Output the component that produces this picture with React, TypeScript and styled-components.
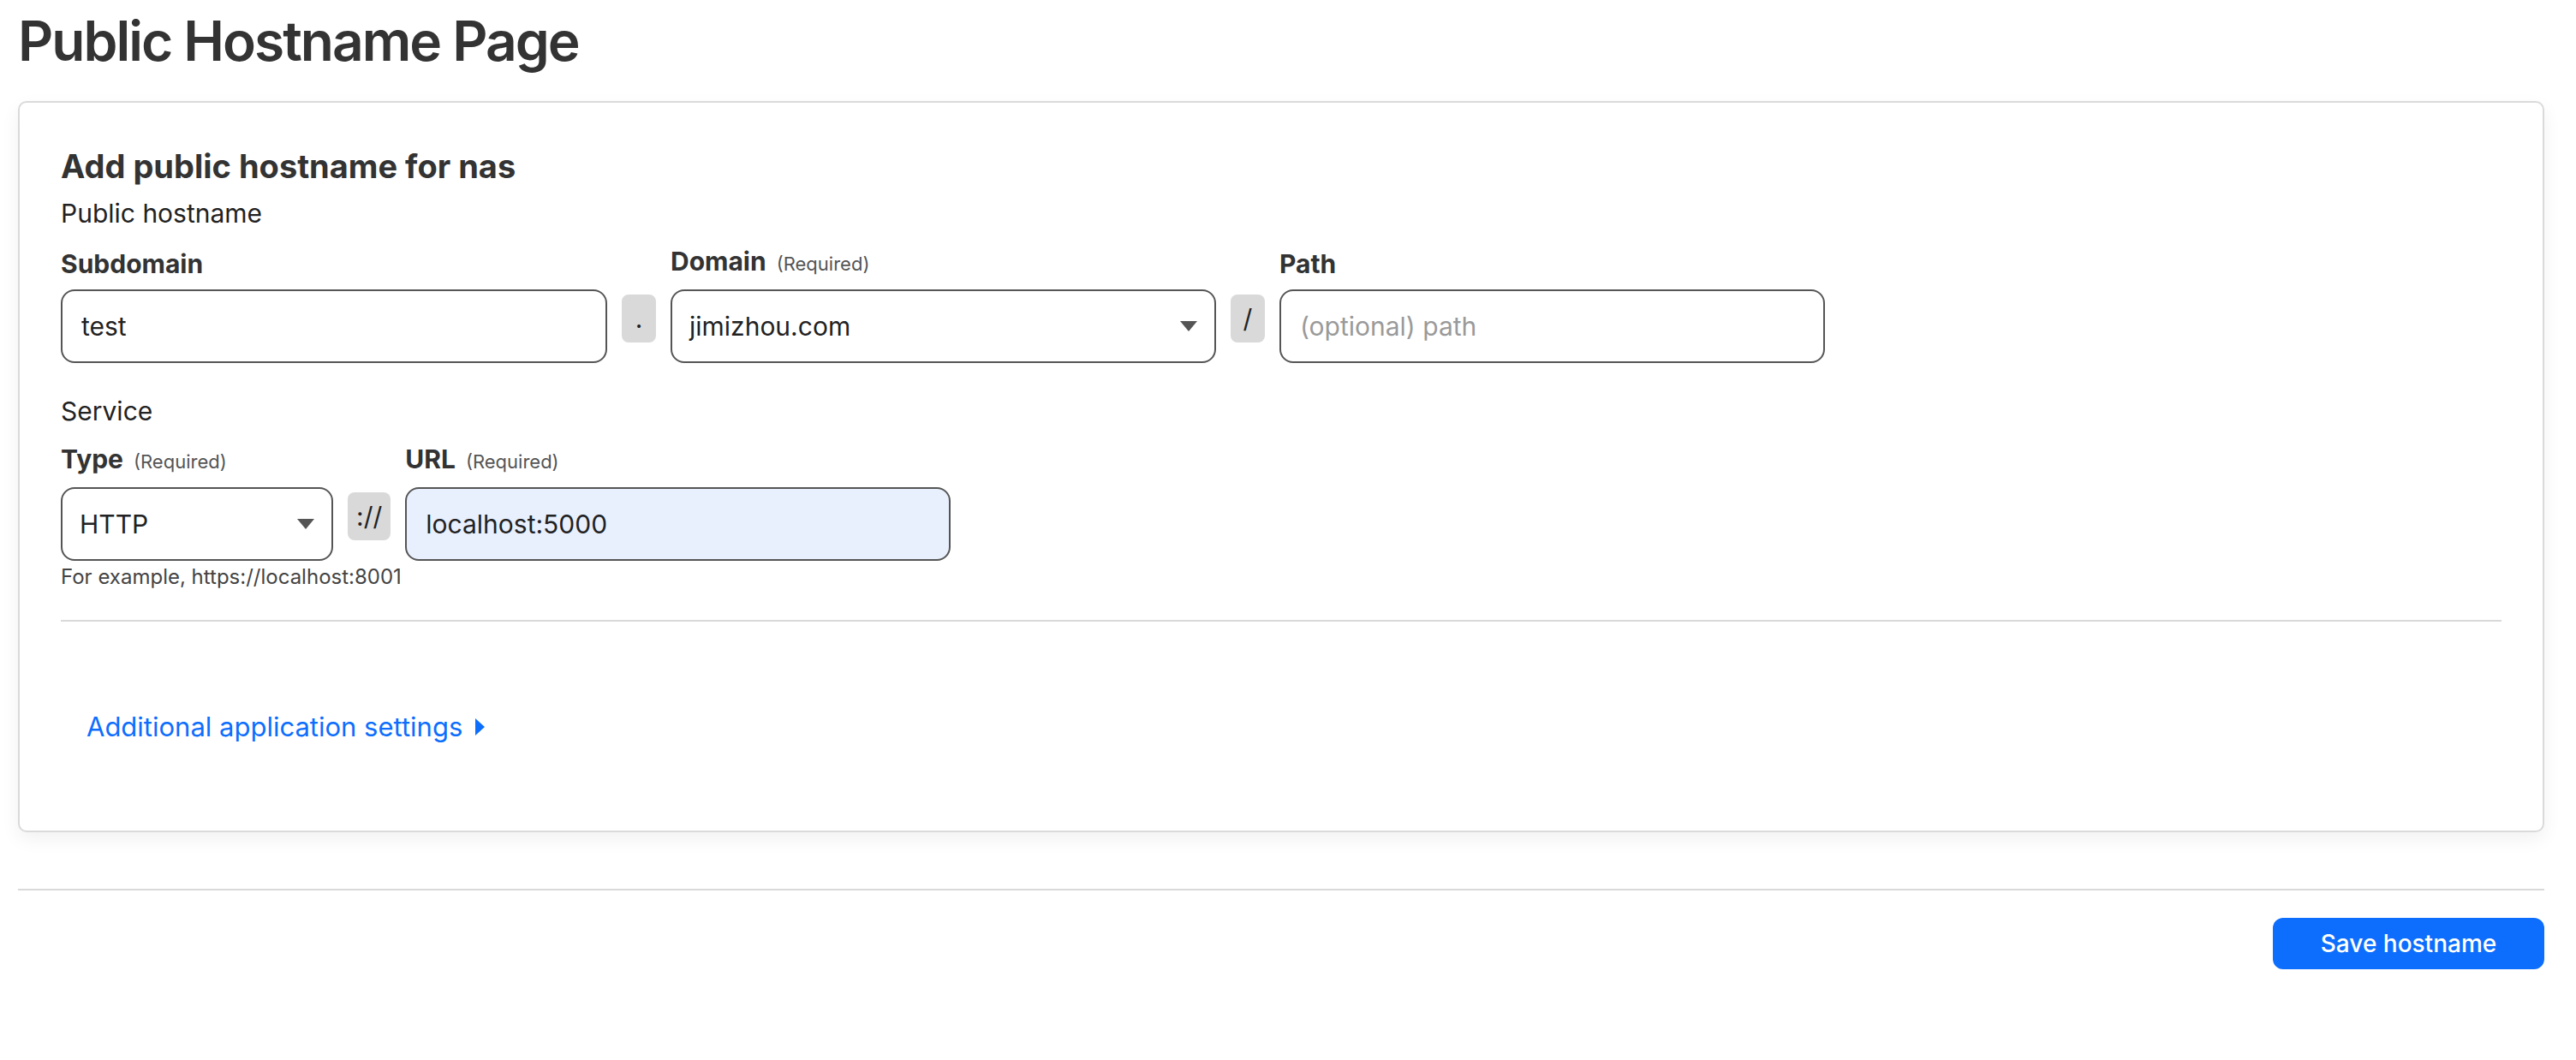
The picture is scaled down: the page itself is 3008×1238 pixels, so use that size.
import React from "react";
import styled, { createGlobalStyle } from "styled-components";

const GlobalStyle = createGlobalStyle`
  html, body {
    margin: 0;
    padding: 0;
    background: #ffffff;
  }
  body {
    font-family: Inter, "Noto Sans", "Liberation Sans", sans-serif;
    color: #333333;
  }
  * { box-sizing: border-box; }
`;

const Page = styled.div`
  padding: 0 37px 40px 21px;
  display: flex;
  flex-direction: column;
`;

const Title = styled.h1`
  margin: 9px 0 0;
  font-size: 64px;
  line-height: 78px;
  font-weight: 600;
  letter-spacing: -2px;
  color: #333333;
`;

const Card = styled.section`
  margin-top: 31px;
  border: 2px solid #dadada;
  border-radius: 10px;
  box-shadow: 0 8px 22px rgba(0, 0, 0, 0.06);
  padding: 50px 48px 0;
  display: flex;
  flex-direction: column;
`;

const CardTitle = styled.h3`
  margin: 0;
  font-size: 38px;
  line-height: 48px;
  font-weight: 700;
  color: #333333;
`;

const SectionLabel = styled.div<{ $gap: number }>`
  margin-top: ${(p) => p.$gap}px;
  font-size: 30px;
  line-height: 40px;
  color: #222222;
`;

const FieldRow = styled.div`
  margin-top: 16px;
  display: flex;
  align-items: flex-end;
  gap: 17px;
`;

const Field = styled.div<{ $width: number }>`
  width: ${(p) => p.$width}px;
  display: flex;
  flex-direction: column;
  gap: 10px;
`;

const LabelLine = styled.div`
  display: flex;
  align-items: baseline;
  gap: 12px;
  line-height: 40px;
`;

const LabelText = styled.span`
  font-size: 30px;
  font-weight: 700;
  color: #333333;
`;

const Hint = styled.span`
  font-size: 22px;
  color: #555555;
`;

const TextInput = styled.input<{ $filled?: boolean }>`
  width: 100%;
  height: 86px;
  border: 2px solid #555555;
  border-radius: 16px;
  padding: 0 22px;
  font-family: inherit;
  font-size: 30px;
  color: #222222;
  background: ${(p) => (p.$filled ? "#e8f0fe" : "#ffffff")};
  outline: none;
  &::placeholder {
    color: #9a9a9a;
  }
`;

const SelectBox = styled.div`
  width: 100%;
  height: 86px;
  border: 2px solid #555555;
  border-radius: 16px;
  padding: 0 20px 0 20px;
  display: flex;
  align-items: center;
  justify-content: space-between;
  font-size: 30px;
  color: #222222;
  background: #ffffff;
`;

const Separator = styled.div`
  align-self: flex-end;
  margin-bottom: 24px;
  min-width: 40px;
  height: 56px;
  padding: 0 10px;
  border-radius: 8px;
  background: #d9d9d9;
  display: flex;
  align-items: center;
  justify-content: center;
  font-size: 30px;
  color: #222222;
`;

const Helper = styled.div`
  margin-top: 4px;
  font-size: 24px;
  line-height: 30px;
  color: #444444;
`;

const Rule = styled.hr<{ $top: number }>`
  margin: ${(p) => p.$top}px 0 0;
  border: none;
  height: 2px;
  background: #d9d9d9;
  width: 100%;
`;

const Disclosure = styled.div`
  padding: 103px 30px 101px;
`;

const DisclosureButton = styled.button`
  border: none;
  background: none;
  padding: 0;
  display: inline-flex;
  align-items: center;
  gap: 15px;
  font-family: inherit;
  font-size: 31px;
  line-height: 40px;
  color: #0d6efd;
  cursor: pointer;
`;

const Footer = styled.div`
  margin-top: 32px;
  display: flex;
  justify-content: flex-end;
`;

const PrimaryButton = styled.button`
  width: 317px;
  height: 60px;
  border: none;
  border-radius: 12px;
  background: #0d6efd;
  color: #ffffff;
  font-family: inherit;
  font-size: 28px;
  font-weight: 500;
  cursor: pointer;
`;

const Caret = ({ dir }: { dir: "down" | "right" }) =>
  dir === "down" ? (
    <svg width="20" height="12" viewBox="0 0 20 12" aria-hidden>
      <path d="M0 0 L20 0 L10 12 Z" fill="#555555" />
    </svg>
  ) : (
    <svg width="11" height="20" viewBox="0 0 11 20" aria-hidden>
      <path d="M0 0 L11 10 L0 20 Z" fill="#0d6efd" />
    </svg>
  );

export default function App() {
  return (
    <>
      <GlobalStyle />
      <Page>
        <Title>Public Hostname Page</Title>
        <Card>
          <CardTitle>Add public hostname for nas</CardTitle>
          <SectionLabel $gap={11}>Public hostname</SectionLabel>
          <FieldRow>
            <Field $width={638}>
              <LabelLine>
                <LabelText>Subdomain</LabelText>
              </LabelLine>
              <TextInput readOnly defaultValue="test" />
            </Field>
            <Separator>.</Separator>
            <Field $width={637}>
              <LabelLine>
                <LabelText>Domain</LabelText>
                <Hint>(Required)</Hint>
              </LabelLine>
              <SelectBox>
                <span>jimizhou.com</span>
                <Caret dir="down" />
              </SelectBox>
            </Field>
            <Separator>/</Separator>
            <Field $width={637}>
              <LabelLine>
                <LabelText>Path</LabelText>
              </LabelLine>
              <TextInput readOnly placeholder="(optional) path" />
            </Field>
          </FieldRow>
          <SectionLabel $gap={36}>Service</SectionLabel>
          <FieldRow>
            <Field $width={318}>
              <LabelLine>
                <LabelText>Type</LabelText>
                <Hint>(Required)</Hint>
              </LabelLine>
              <SelectBox>
                <span>HTTP</span>
                <Caret dir="down" />
              </SelectBox>
            </Field>
            <Separator>://</Separator>
            <Field $width={637}>
              <LabelLine>
                <LabelText>URL</LabelText>
                <Hint>(Required)</Hint>
              </LabelLine>
              <TextInput readOnly $filled defaultValue="localhost:5000" />
            </Field>
          </FieldRow>
          <Helper>For example, https://localhost:8001</Helper>
          <Rule $top={35} />
          <Disclosure>
            <DisclosureButton type="button">
              Additional application settings
              <Caret dir="right" />
            </DisclosureButton>
          </Disclosure>
        </Card>
        <Rule $top={66} />
        <Footer>
          <PrimaryButton type="button">Save hostname</PrimaryButton>
        </Footer>
      </Page>
    </>
  );
}
